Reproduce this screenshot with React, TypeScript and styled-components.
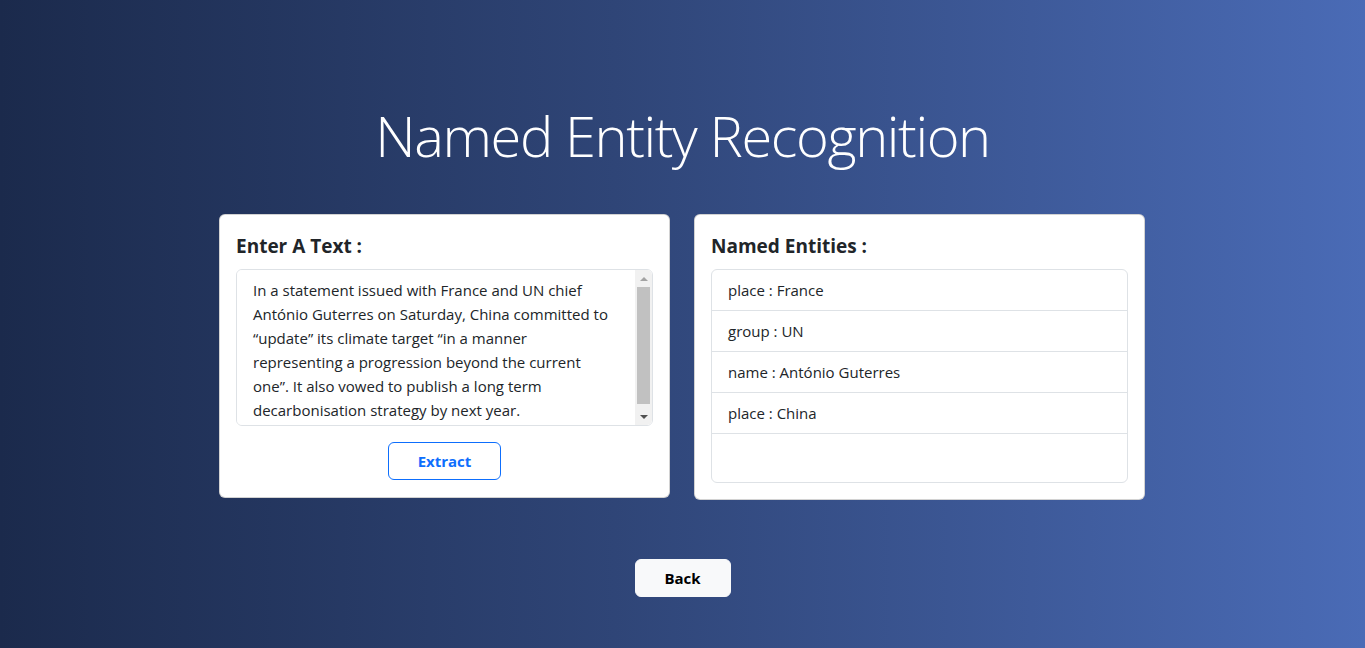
import React, { useState } from 'react'
import styled, { createGlobalStyle } from 'styled-components'

const GlobalStyle = createGlobalStyle`
  * { box-sizing: border-box; }
  body {
    margin: 0;
    font-family: "Open Sans", "Noto Sans", sans-serif;
    color: #212529;
  }
`

const sample =
  'In a statement issued with France and UN chief António Guterres on Saturday, China committed to “update” its climate target “in a manner representing a progression beyond the current one”. It also vowed to publish a long term decarbonisation strategy by next year.'

const entities = [
  { label: 'place', value: 'France' },
  { label: 'group', value: 'UN' },
  { label: 'name', value: 'António Guterres' },
  { label: 'place', value: 'China' },
]

const App = () => {
  const [text, setText] = useState(sample)

  return (
    <Page>
      <GlobalStyle />
      <Title>Named Entity Recognition</Title>
      <Row>
        <Card>
          <Heading>Enter A Text :</Heading>
          <TextWrap>
            <TextArea value={text} onChange={(e) => setText(e.target.value)} />
            {/* the browser hides native scrollbars, so draw the classic one */}
            <ScrollTrack aria-hidden>
              <ScrollButton>
                <Arrow dir="up" />
              </ScrollButton>
              <Thumb />
              <ScrollButton>
                <Arrow dir="down" />
              </ScrollButton>
            </ScrollTrack>
          </TextWrap>
          <Extract type="button">Extract</Extract>
        </Card>
        <Card>
          <Heading>Named Entities :</Heading>
          <List>
            {entities.map((en, i) => (
              <Item key={i}>
                {en.label} : {en.value}
              </Item>
            ))}
            <Item empty />
          </List>
        </Card>
      </Row>
      <Back type="button">Back</Back>
    </Page>
  )
}

export default App

const Page = styled.div`
  min-height: 100vh;
  display: flex;
  flex-direction: column;
  align-items: center;
  padding-top: 99px;
  background: linear-gradient(90deg, #1b2a4c 0%, #2f4577 45%, #4a6bb6 100%);
`

const Title = styled.h1`
  margin: 0 0 43px;
  font-family: "Open Sans", sans-serif;
  font-weight: 300;
  font-size: 56px;
  letter-spacing: -1.4px;
  line-height: 72px;
  color: #fff;
`

const Row = styled.div`
  display: flex;
  align-items: flex-start;
  gap: 24px;
  margin-right: 1px;
`

const Card = styled.div`
  width: 451px;
  background: #fff;
  border: 1px solid rgba(0, 0, 0, 0.175);
  border-radius: 6px;
  padding: 16px;
  display: flex;
  flex-direction: column;
`

const Heading = styled.h5`
  margin: 0 0 8px;
  font-size: 19px;
  font-weight: 700;
  line-height: 30px;
  color: #212529;
`

const TextWrap = styled.div`
  position: relative;
  height: 157px;
`

const TextArea = styled.textarea`
  display: block;
  width: 100%;
  height: 100%;
  resize: none;
  border: 1px solid #dee2e6;
  border-radius: 6px;
  padding: 8px 33px 8px 16px;
  font-family: "Open Sans", sans-serif;
  font-size: 15px;
  line-height: 24px;
  color: #212529;
  outline: none;
`

const ScrollTrack = styled.div`
  position: absolute;
  top: 1px;
  right: 1px;
  bottom: 1px;
  width: 17px;
  display: flex;
  flex-direction: column;
  background: #f1f1f1;
  border-radius: 0 5px 5px 0;
  pointer-events: none;
`

const ScrollButton = styled.div`
  height: 17px;
  display: flex;
  align-items: center;
  justify-content: center;
`

const Arrow = styled.span<{ dir: 'up' | 'down' }>`
  width: 0;
  height: 0;
  border-left: 4px solid transparent;
  border-right: 4px solid transparent;
  ${(p) =>
    p.dir === 'up'
      ? 'border-bottom: 4px solid #a3a3a3;'
      : 'border-top: 4px solid #505050;'}
`

const Thumb = styled.div`
  flex: 1;
  margin: 0 2px 4px;
  background: #c1c1c1;
`

const Extract = styled.button`
  align-self: center;
  margin: 16px 0 1px;
  width: 113px;
  height: 38px;
  background: #fff;
  border: 1px solid #0d6efd;
  border-radius: 6px;
  color: #0d6efd;
  font-family: "Open Sans", sans-serif;
  font-weight: 700;
  font-size: 15px;
  cursor: pointer;
`

const List = styled.ul`
  margin: 0;
  padding: 0;
  list-style: none;
  border: 1px solid #dee2e6;
  border-radius: 6px;
`

const Item = styled.li<{ empty?: boolean }>`
  padding: 8px 16px;
  height: ${(p) => (p.empty ? '48px' : '41px')};
  font-size: 15px;
  line-height: 24px;
  border-bottom: ${(p) => (p.empty ? 'none' : '1px solid #dee2e6')};
`

const Back = styled.button`
  margin-top: 59px;
  width: 96px;
  height: 38px;
  background: #f8f9fa;
  border: 1px solid #f8f9fa;
  border-radius: 6px;
  font-family: "Open Sans", sans-serif;
  font-weight: 700;
  font-size: 15px;
  color: #000;
  cursor: pointer;
`
